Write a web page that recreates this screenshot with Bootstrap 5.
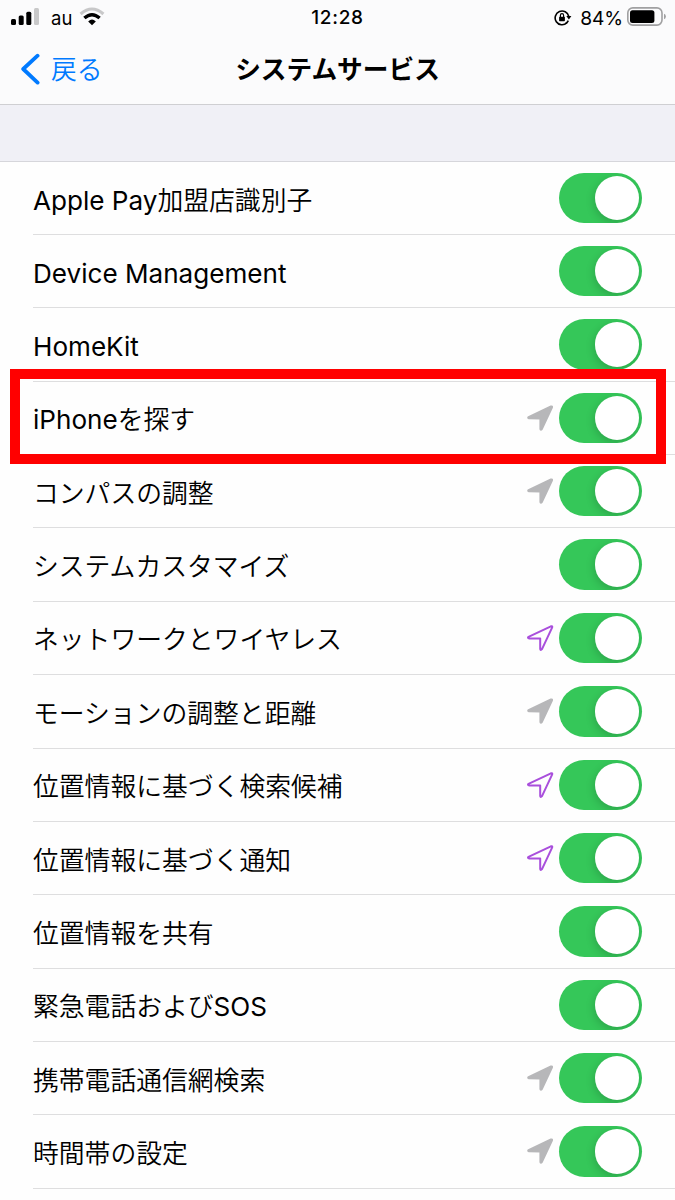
<!DOCTYPE html>
<html lang="ja">
<head>
<meta charset="utf-8">
<meta name="viewport" content="width=device-width, initial-scale=1">
<title>システムサービス</title>
<link rel="stylesheet" href="https://cdn.jsdelivr.net/npm/bootstrap@5.3.0/dist/css/bootstrap.min.css">
<style>
  body { font-family: Inter, "Noto Sans CJK JP", sans-serif; background: #fefefe; color: #000; height: 1200px; overflow: hidden; }
  svg { display: block; flex: none; }
  .topbar { height: 105px; background: #fbfbfc; border-bottom: 1px solid #cfcfd2; }
  .statusbar { height: 34px; font-size: 19px; line-height: 34px; }
  .side { flex: 1 1 0; }
  .carrier { margin-left: 11px; font-size: 18.5px; padding-top: 1px; }
  .wifi { margin-left: 7px; }
  .clock { font-size: 19px; font-weight: 550; letter-spacing: .7px; padding-top: 2px; }
  .percent { margin: 0 4px 0 8px; font-size: 19.2px; letter-spacing: -.15px; padding-top: 1px; }
  .titlebar { height: 70px; }
  .back { color: #007aff; font-size: 25.8px; font-weight: 350; gap: 11px; padding-left: 20px; line-height: 70px; }
  .back span { padding-top: 1px; }
  .page-title { font-size: 25.7px; font-weight: 600; line-height: 70px; padding-top: 1px; }
  .gap-band { height: 56px; background: #f0f0f6; }
  .services { border-top: 1px solid #d6d6db; }
  .service { height: 73.36px; margin-left: 33px; padding-right: 33px; border-bottom: 1px solid #dededf; }
  .service:first-child { height: 73px; }
  .label-text { font-size: 25.8px; font-weight: 350; line-height: 40px; padding-top: 5px; white-space: nowrap; }
  .latin { font-weight: 400; font-size: 26.1px; letter-spacing: 0; }
  .switch { width: 83px; height: 50.4px; border-radius: 26px; background: #35c759; padding: 3px; overflow: hidden; margin-left: 5px; }
  .knob { width: 44.4px; height: 44.4px; border-radius: 50%; background: #fff; box-shadow: -1px 3px 9px rgba(0,0,0,.17); }
  .highlight { left: -23px; top: -13px; width: 656px; height: 95px; border: 10px solid #f00; pointer-events: none; }
</style>
</head>
<body>
<svg width="0" height="0" class="position-absolute">
  <defs>
    <path id="arrow" d="M1.5 12.9 L23.9 2.3 Q25.6 1.8 25.2 3.4 L15 25.2 Q13.6 26.8 13.2 25 L13.2 14.6 L1.9 14.4 Q.3 13.8 1.5 12.9Z"/>
  </defs>
</svg>
<header class="topbar">
  <div class="statusbar d-flex align-items-center">
    <div class="side d-flex align-items-center">
      <svg width="40" height="34" viewBox="0 0 40 34"><rect x="11" y="19" width="5" height="6" rx="1.5"/><rect x="18.7" y="15.5" width="5" height="9.5" rx="1.5"/><rect x="26.3" y="11.8" width="5" height="13.2" rx="1.5"/><rect x="34" y="8" width="5" height="17" rx="1.5" fill="#c8c8c9"/></svg>
      <span class="carrier">au</span>
      <svg class="wifi" width="26" height="34" viewBox="0 0 26 34" fill="none"><path d="M1.6 14 Q13 4 24.4 14" stroke="#c8c8c9" stroke-width="3.1"/><path d="M5.4 18.1 Q13 11.3 20.6 18.1" stroke="#000" stroke-width="3.4"/><path d="M9.2 21.6 Q13 17.6 16.8 21.6 L13 25.2Z" fill="#000"/></svg>
    </div>
    <div class="clock">12:28</div>
    <div class="side d-flex align-items-center justify-content-end">
      <svg width="18" height="34" viewBox="0 0 18 34" fill="none" stroke="#000"><path d="M12.9 22.8 A6.9 6.9 0 1 1 14.8 16.5" stroke-width="1.6"/><path d="M11.5 23.6 A6.9 6.9 0 0 0 14.3 20.6" stroke-width="1.6"/><path d="M12.3 16 H17.4 L14.9 19.4Z" fill="#000" stroke="none"/><rect x="5.1" y="16.7" width="5.8" height="4.6" rx=".7" fill="#000" stroke="none"/><path d="M6.4 17 V15.4 Q6.4 13.7 8 13.7 T9.6 15.4 V17" stroke-width="1.2"/></svg>
      <span class="percent">84%</span>
      <svg width="48" height="34" viewBox="0 0 48 34"><rect x=".8" y="7.9" width="34.2" height="17.2" rx="5" fill="none" stroke="#a0a0a1" stroke-width="1.6"/><rect x="3" y="10.2" width="24.4" height="12.8" rx="2.5"/><path d="M37 13.8 Q38.9 14.6 38.9 16.5 T37 19.3Z" fill="#a0a0a1"/></svg>
    </div>
  </div>
  <nav class="titlebar d-flex align-items-center">
    <div class="side"><a href="#" class="back d-flex align-items-center text-decoration-none"><svg width="20" height="32" viewBox="0 0 20 32"><path d="M17.6 2.7 L3.2 16 L17.6 29.6" fill="none" stroke="#007aff" stroke-width="3.8" stroke-linecap="round" stroke-linejoin="round"/></svg><span>戻る</span></a></div>
    <h1 class="page-title mb-0">システムサービス</h1>
    <div class="side"></div>
  </nav>
</header>
<div class="gap-band"></div>
<ul class="services list-unstyled mb-0" id="services"></ul>
<script src="https://cdn.jsdelivr.net/npm/bootstrap@5.3.0/dist/js/bootstrap.bundle.min.js"></script>
<script>
  // [label, location arrow: g = grey, p = purple outline, highlighted]
  const rows = [
    ['<span class="latin">Apple Pay</span>加盟店識別子'],
    ['<span class="latin">Device Management</span>'],
    ['<span class="latin">HomeKit</span>'],
    ['<span class="latin">iPhone</span>を探す', 'g', true],
    ['コンパスの調整', 'g'],
    ['システムカスタマイズ'],
    ['ネットワークとワイヤレス', 'p'],
    ['モーションの調整と距離', 'g'],
    ['位置情報に基づく検索候補', 'p'],
    ['位置情報に基づく通知', 'p'],
    ['位置情報を共有'],
    ['緊急電話および<span class="latin">SOS</span>'],
    ['携帯電話通信網検索', 'g'],
    ['時間帯の設定', 'g']
  ];
  const paint = { g: 'fill="#b7b7b9" stroke="#b7b7b9" stroke-width="1.6" stroke-linejoin="round"', p: 'fill="none" stroke="#a94fdc" stroke-width="2" stroke-linejoin="round"' };
  document.getElementById('services').innerHTML = rows.map(([label, arrow, marked]) =>
    `<li class="service position-relative d-flex align-items-center">
      <span class="label-text me-auto">${label}</span>
      ${arrow ? `<svg width="27" height="28" viewBox="0 0 27 28" overflow="visible" ${paint[arrow]}><use href="#arrow"/></svg>` : ''}
      <span class="switch d-flex justify-content-end align-items-center"><span class="knob"></span></span>
      ${marked ? '<span class="highlight position-absolute"></span>' : ''}
    </li>`).join('');
</script>
</body>
</html>
